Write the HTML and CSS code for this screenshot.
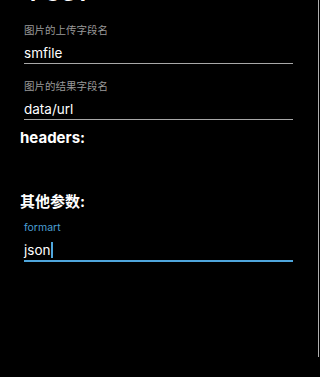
FILE: index.html
```html
<!DOCTYPE html>
<html lang="zh">
<head>
    <meta charset="UTF-8">
    <meta name="viewport" content="width=device-width, initial-scale=1.0">
    <title>上传设置</title>
    <link rel="stylesheet" href="styles.css">
</head>
<body>

    <div class="page">
        <h1 class="method">POST</h1>

        <div class="field">
            <div class="label">图片的上传字段名</div>
            <div class="input">smfile</div>
        </div>

        <div class="field">
            <div class="label">图片的结果字段名</div>
            <div class="input">data/url</div>
        </div>

        <h2 class="section">headers:</h2>
        <div class="headers"></div>

        <h2 class="section">其他参数:</h2>

        <div class="field active">
            <div class="label">formart</div>
            <div class="input">json<span class="caret"></span></div>
        </div>
    </div>

</body>
</html>
```

FILE: styles.css
```css
body {
    margin: 0;
    background-color: #000;
    font-family: Inter, "Noto Sans CJK SC", sans-serif;
    color: #fff;
    overflow: hidden;
}

.page {
    height: 100vh;
    margin-right: 1px;
    border-right: 1px solid #b0b0b0;
    padding-left: 20px;
}

.method {
    margin: -20px 0 0 10px;
    font-size: 22px;
    line-height: 26px;
    font-weight: bold;
}

.field {
    width: 269px;
    margin: 17px 0 0 4px;
}

.field + .field {
    margin-top: 15px;
}

.label {
    font-size: 10.5px;
    line-height: 16px;
    color: #999;
}

.input {
    padding-top: 5px;
    font-size: 13.5px;
    line-height: 19px;
    border-bottom: 1px solid #a8a8a8;
}

.section {
    margin: 8px 0 0;
    font-size: 15px;
    line-height: 20px;
    font-weight: bold;
}

.headers {
    height: 36px;
}

.field.active {
    margin-top: 8px;
}

.field.active .label {
    color: #4a9fd4;
}

.field.active .input {
    border-bottom: 2px solid #4fa6dc;
}

.caret {
    display: inline-block;
    width: 1.5px;
    height: 16px;
    margin-left: 1px;
    vertical-align: -3px;
    background-color: #4fa6dc;
}
```
